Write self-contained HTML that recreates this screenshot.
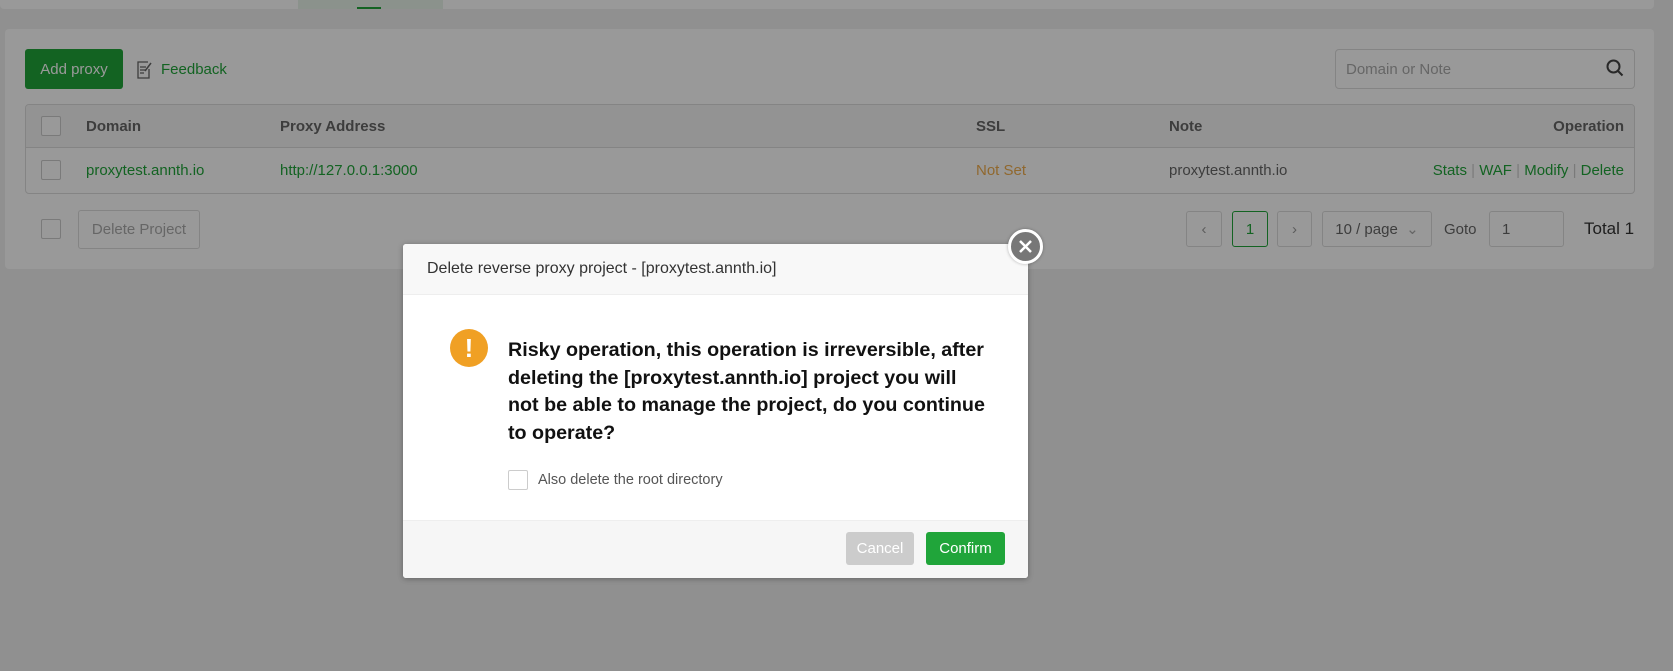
<!DOCTYPE html>
<html><head><meta charset="utf-8"><style>
*{box-sizing:border-box;margin:0;padding:0}
body{width:1673px;height:671px;overflow:hidden;background:#f0f0f0;font-family:"Liberation Sans",sans-serif;font-size:15px;color:#333;position:relative}
.abs{position:absolute}
.top{left:0;top:0;width:1654px;height:9px;background:#fff;border-radius:0 0 4px 4px}
.panel{left:5px;top:29px;width:1649px;height:240px;background:#fff;border-radius:4px}
.btn{position:absolute;border-radius:3px;display:flex;align-items:center;justify-content:center}
.cb{position:absolute;width:20px;height:20px;border:1px solid #ccc;border-radius:2px;background:#fff}
.g{color:#20a53a}
.overlay{left:0;top:0;width:1673px;height:671px;background:rgba(0,0,0,0.4)}
.pg{position:absolute;top:211px;height:36px;border:1px solid #ddd;border-radius:3px;display:flex;align-items:center;justify-content:center;color:#999}
</style></head><body>
<div class="abs top"></div>
<div class="abs" style="left:298px;top:0;width:145px;height:9px;background:#e8f3ea"></div>
<div class="abs" style="left:357px;top:7px;width:24px;height:2px;background:#20a53a"></div>
<div class="abs panel"></div>
<div class="btn" style="left:25px;top:49px;width:98px;height:40px;background:#20a53a;color:#fff">Add proxy</div>
<svg class="abs" style="left:136px;top:60px" width="17" height="19" viewBox="0 0 17 19"><path d="M12 2H2v16h11V9M4 7h6M4 10h6M4 13h4" fill="none" stroke="#666" stroke-width="1.3"/><path d="M9 11l6-8" stroke="#666" stroke-width="1.5"/></svg>
<div class="abs g" style="left:161px;top:61px">Feedback</div>
<div class="abs" style="left:1335px;top:49px;width:300px;height:40px;border:1px solid #ddd;border-radius:4px;background:#fff"></div>
<div class="abs" style="left:1346px;top:61px;color:#aaa">Domain or Note</div>
<svg class="abs" style="left:1606px;top:59px" width="18" height="18" viewBox="0 0 18 18"><circle cx="7.5" cy="7.5" r="6" fill="none" stroke="#444" stroke-width="2"/><path d="M12 12l4.5 4.5" stroke="#444" stroke-width="2"/></svg>
<div class="abs" style="left:25px;top:104px;width:1610px;height:90px;border:1px solid #ddd;border-radius:4px;background:#fff;overflow:hidden">
 <div style="height:43px;background:#f5f5f5;border-bottom:1px solid #ddd"></div>
</div>
<div class="cb" style="left:41px;top:116px"></div>
<div class="cb" style="left:41px;top:160px"></div>
<div class="abs" style="left:86px;top:118px;font-weight:bold;color:#666">Domain</div>
<div class="abs" style="left:280px;top:118px;font-weight:bold;color:#666">Proxy Address</div>
<div class="abs" style="left:976px;top:118px;font-weight:bold;color:#666">SSL</div>
<div class="abs" style="left:1169px;top:118px;font-weight:bold;color:#666">Note</div>
<div class="abs" style="left:1500px;width:124px;text-align:right;top:118px;font-weight:bold;color:#666">Operation</div>
<div class="abs g" style="left:86px;top:162px">proxytest.annth.io</div>
<div class="abs g" style="left:280px;top:162px">http://127.0.0.1:3000</div>
<div class="abs" style="left:976px;top:162px;color:#f0ad4e">Not Set</div>
<div class="abs" style="left:1169px;top:162px;color:#666">proxytest.annth.io</div>
<div class="abs g" style="left:1400px;width:224px;text-align:right;top:162px">Stats <span style="color:#ccc">|</span> WAF <span style="color:#ccc">|</span> Modify <span style="color:#ccc">|</span> Delete</div>
<div class="cb" style="left:41px;top:219px"></div>
<div class="btn" style="left:78px;top:210px;width:122px;height:39px;border:1px solid #ddd;color:#aaa">Delete Project</div>
<div class="pg" style="left:1186px;width:36px">&lsaquo;</div>
<div class="pg" style="left:1232px;width:36px;border-color:#20a53a;color:#20a53a">1</div>
<div class="pg" style="left:1277px;width:35px">&rsaquo;</div>
<div class="pg" style="left:1322px;width:110px;color:#666">10 / page &nbsp;<span style="color:#aaa">&#8964;</span></div>
<div class="abs" style="left:1444px;top:221px;color:#666">Goto</div>
<div class="pg" style="left:1489px;width:75px;justify-content:flex-start;padding-left:12px;color:#666">1</div>
<div class="abs" style="left:1584px;top:219px;font-size:17px;color:#333">Total 1</div>
<div class="abs overlay"></div>
<div class="abs" style="left:403px;top:244px;width:625px;height:334px;background:#fff;border-radius:3px;overflow:hidden;box-shadow:0 1px 6px rgba(0,0,0,.3)">
 <div style="height:51px;background:#f8f8f8;border-bottom:1px solid #eee;padding:16px 24px;font-size:16px;color:#333">Delete reverse proxy project - [proxytest.annth.io]</div>
 <div style="position:absolute;left:0;top:276px;width:625px;height:58px;background:#f6f6f6;border-top:1px solid #eee"></div>
</div>
<div class="abs" style="left:1008px;top:229px;width:35px;height:35px;border-radius:50%;background:#777;border:3px solid #fff;box-shadow:0 0 3px rgba(0,0,0,.3)"></div>
<svg class="abs" style="left:1016px;top:237px" width="19" height="19" viewBox="0 0 19 19"><path d="M4 4l11 11M15 4L4 15" stroke="#fff" stroke-width="2.5"/></svg>
<div class="abs" style="left:450px;top:329px;width:38px;height:38px;border-radius:50%;background:#f0a024;color:#fff;font-weight:bold;font-size:26px;text-align:center;line-height:38px">!</div>
<div class="abs" style="left:508px;top:337px;white-space:nowrap;font-size:19.7px;font-weight:bold;line-height:27.5px;color:#111">Risky operation, this operation is irreversible, after<br>deleting the [proxytest.annth.io] project you will<br>not be able to manage the project, do you continue<br>to operate?</div>
<div class="cb" style="left:508px;top:470px;border-color:#ccc"></div>
<div class="abs" style="left:538px;top:472px;color:#555;font-size:14.5px">Also delete the root directory</div>
<div class="btn" style="left:846px;top:532px;width:68px;height:33px;background:#ccc;color:#fff">Cancel</div>
<div class="btn" style="left:926px;top:532px;width:79px;height:33px;background:#20a53a;color:#fff">Confirm</div>
</body></html>
